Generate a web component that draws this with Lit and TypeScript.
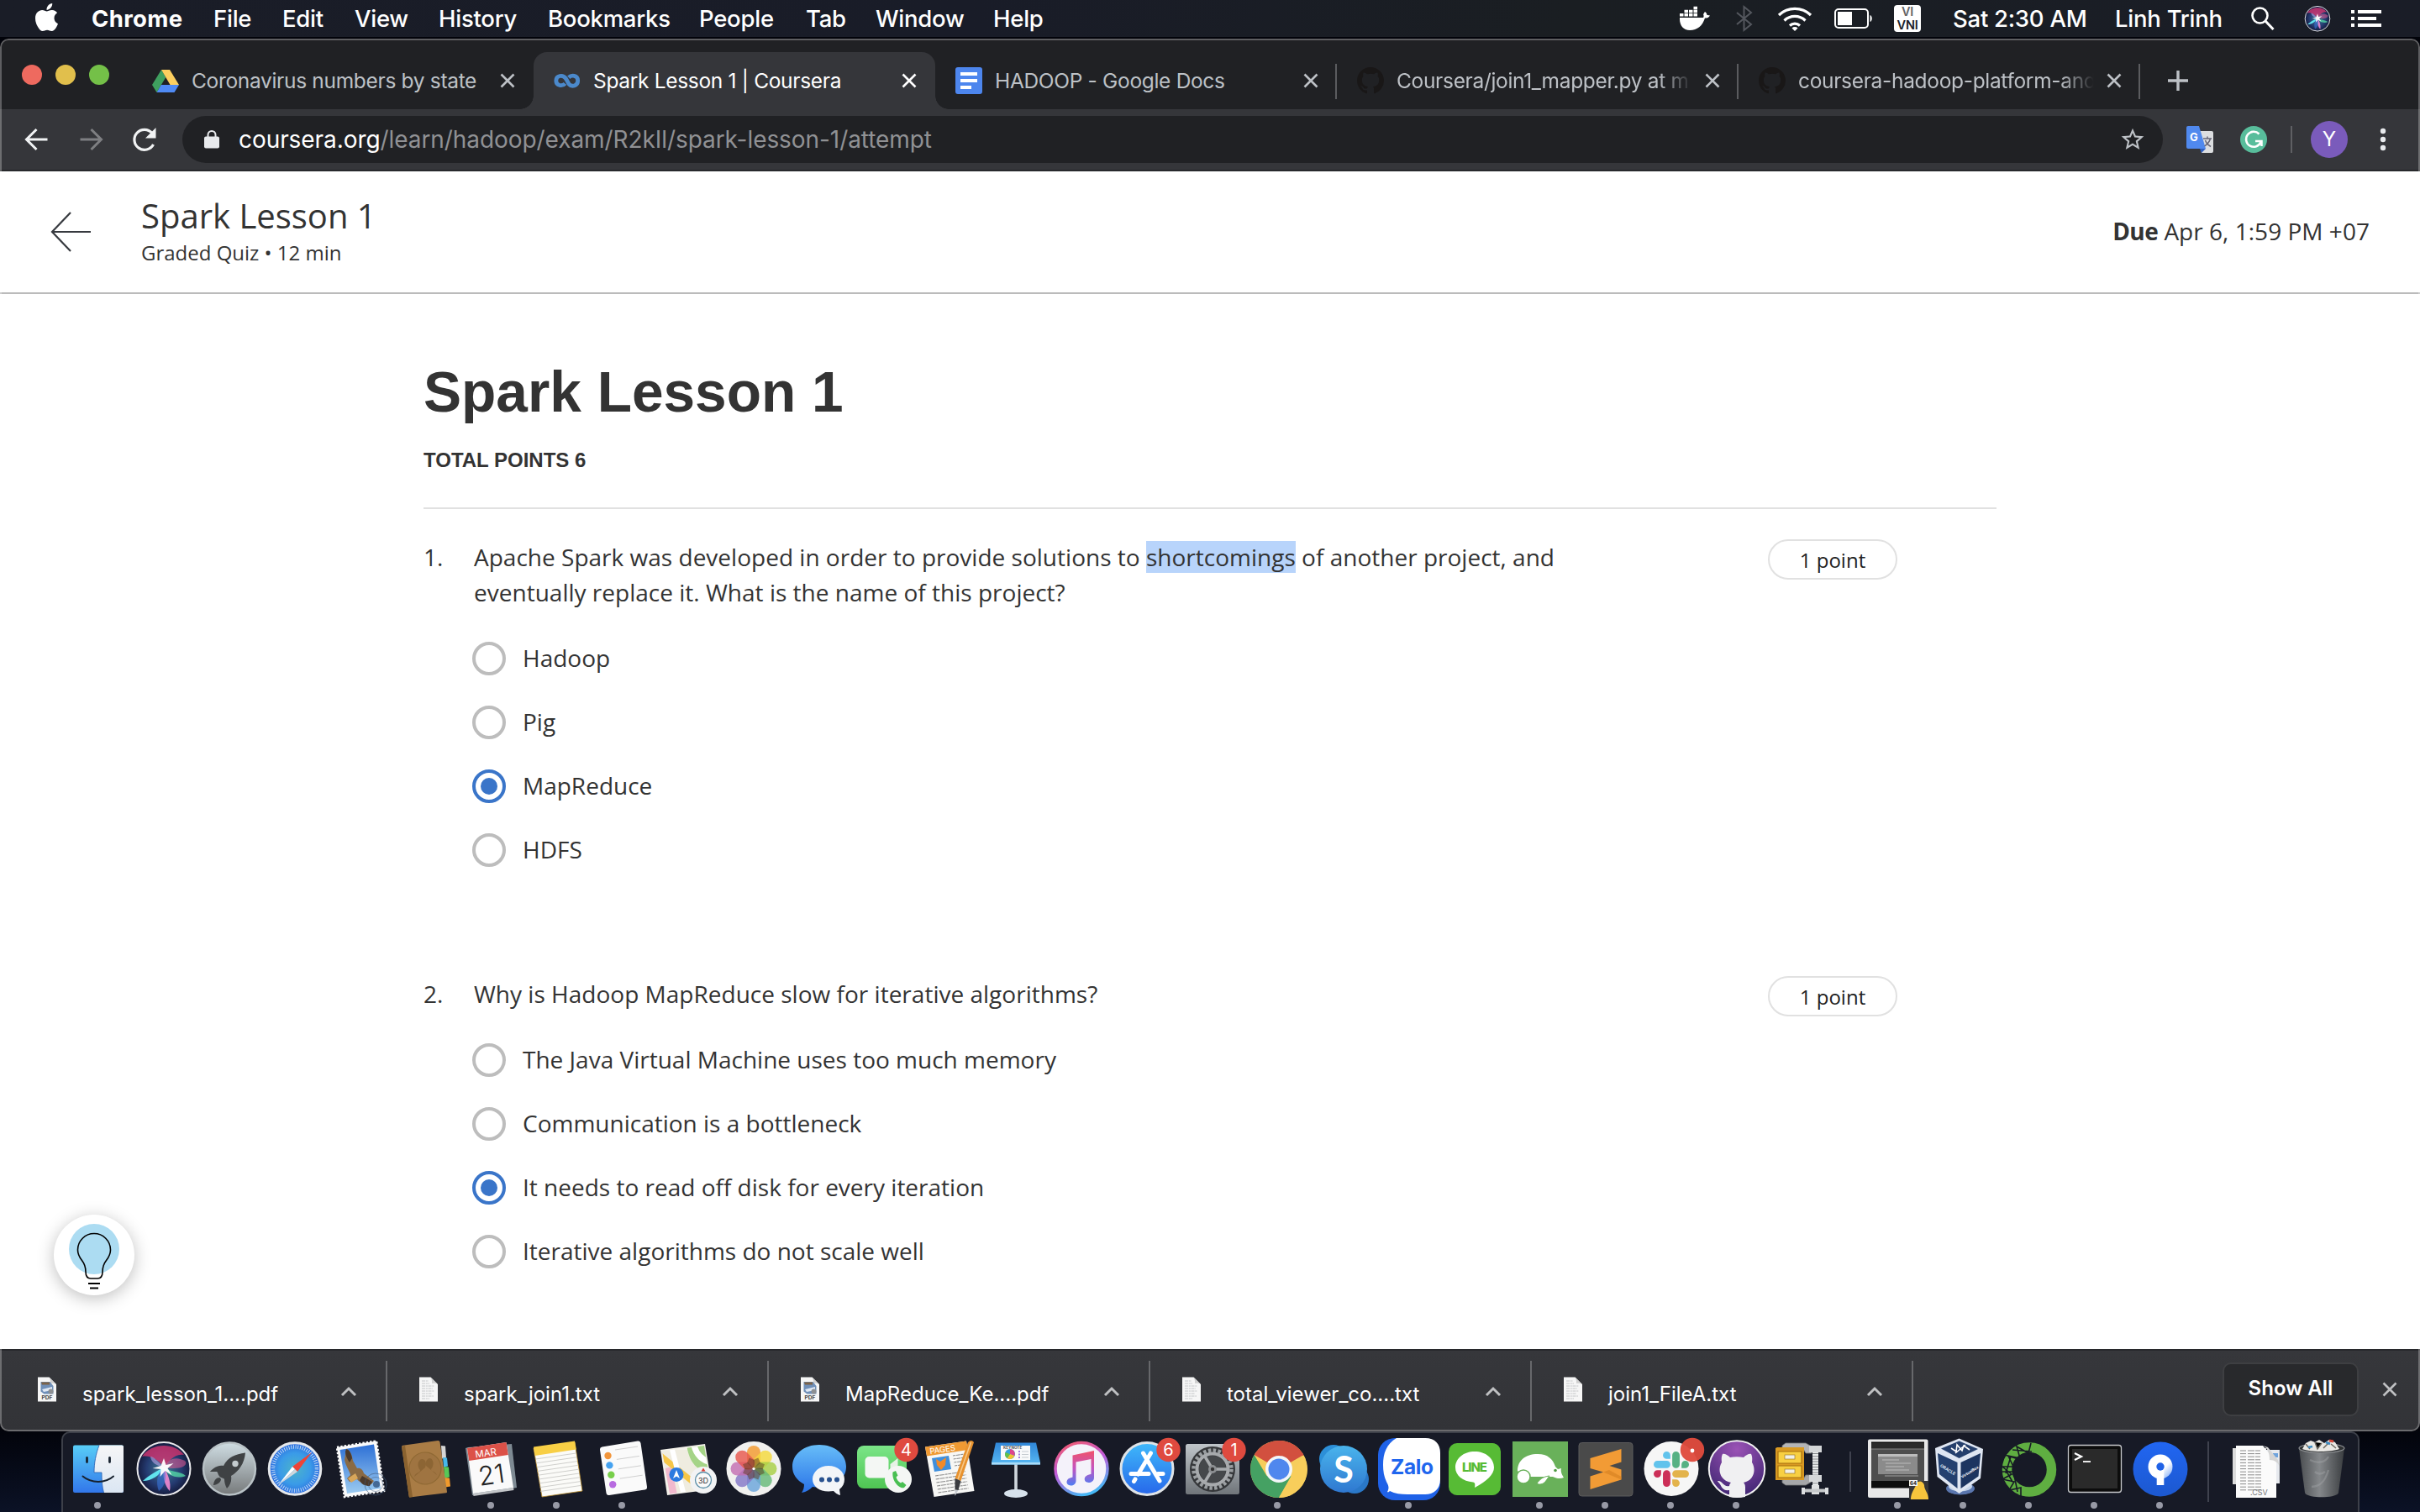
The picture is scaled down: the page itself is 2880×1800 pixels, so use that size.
import { LitElement, html, svg, css } from "lit";
import { customElement } from "lit/decorators.js";

const OCTOCAT =
  "M8 0C3.58 0 0 3.58 0 8c0 3.54 2.29 6.53 5.47 7.59.4.07.55-.17.55-.38 0-.19-.01-.82-.01-1.49-2.01.37-2.53-.49-2.69-.94-.09-.23-.48-.94-.82-1.13-.28-.15-.68-.52-.01-.53.63-.01 1.08.58 1.23.82.72 1.21 1.87.87 2.33.66.07-.52.28-.87.51-1.07-1.78-.2-3.64-.89-3.64-3.95 0-.87.31-1.59.82-2.15-.08-.2-.36-1.02.08-2.12 0 0 .67-.21 2.2.82.64-.18 1.32-.27 2-.27s1.36.09 2 .27c1.53-1.04 2.2-.82 2.2-.82.44 1.1.16 1.92.08 2.12.51.56.82 1.27.82 2.15 0 3.07-1.87 3.75-3.65 3.95.29.25.54.73.54 1.48 0 1.07-.01 1.93-.01 2.2 0 .21.15.46.55.38A8.01 8.01 0 0 0 16 8c0-4.42-3.58-8-8-8z";

const APPLE =
  "M318.7 268.7c-.2-36.7 16.4-64.4 50-84.8-18.8-26.9-47.2-41.7-84.7-44.6-35.5-2.8-74.3 20.7-88.5 20.7-15 0-49.4-19.7-76.4-19.7C63.3 141.2 4 184.8 4 273.5q0 39.3 14.4 81.2c12.8 36.7 59 126.7 107.2 125.2 25.2-.6 43-17.9 75.8-17.9 31.8 0 48.3 17.9 76.4 17.9 48.6-.7 90.4-82.5 102.6-119.3-65.2-30.7-61.7-90-61.7-91.9zm-56.6-164.2c27.3-32.4 24.8-61.9 24-72.5-24.1 1.4-52 16.4-67.9 34.9-17.5 19.8-27.8 44.3-25.6 71.9 26.1 2 49.9-11.4 69.5-34.3z";

const range = (n: number) => Array.from({ length: n }, (_, i) => i);

/* ---------- menu bar ---------- */

const MENUS = ["File", "Edit", "View", "History", "Bookmarks", "People", "Tab", "Window", "Help"];

/* ---------- tabs ---------- */

const driveIcon = html`<svg class="fav" viewBox="0 0 32 32">
  <path d="M11 3L0 21l5.500 9L16.300 12z" fill="#3f9f5f" />
  <path d="M11 3h10l11 18H21.500z" fill="#fccf5f" />
  <path d="M10.800 21H32l-5.500 9H5.500z" fill="#4f8af4" />
</svg>`;
const courseraIcon = html`<svg class="fav" viewBox="0 0 32 32">
  <path d="M13.500 19.500C10.500 23 2.800 22.500 2.800 16S11 8.800 14 13c1.700 2.300 2.600 5 4.300 7.300 3 3.400 10.400 2.400 10.400-4.300S21 9 17.800 12.200" fill="none" stroke="#4b89cb" stroke-width="4.800" />
</svg>`;
const docsIcon = html`<svg class="fav" viewBox="0 0 32 32">
  <rect width="32" height="32" rx="3" fill="#4d86ee" />
  <path d="M6 8h20M6 16h20M6 24h13" stroke="#fff" stroke-width="4" />
</svg>`;
const hubIcon = html`<svg class="fav" viewBox="0 0 16 16"><path d=${OCTOCAT} fill="#191717" /></svg>`;

const TABS = [
  { title: "Coronavirus numbers by state", icon: driveIcon, cls: "" },
  { title: "Spark Lesson 1 | Coursera", icon: courseraIcon, cls: "active" },
  { title: "HADOOP - Google Docs", icon: docsIcon, cls: "line" },
  { title: "Coursera/join1_mapper.py at m", icon: hubIcon, cls: "line fade" },
  { title: "coursera-hadoop-platform-and", icon: hubIcon, cls: "line fade" },
];

const cross = html`<svg class="cross" viewBox="0 0 20 20"><path d="M2.500 2.500l15 15M17.500 2.500l-15 15" /></svg>`;

/* ---------- quiz ---------- */

const QUESTIONS = [
  {
    text: html`Apache Spark was developed in order to provide solutions to <span class="sel">shortcomings</span> of another project, and eventually replace it. What is the name of this project?`,
    options: ["Hadoop", "Pig", "MapReduce", "HDFS"],
    picked: 2,
  },
  {
    text: html`Why is Hadoop MapReduce slow for iterative algorithms?`,
    options: [
      "The Java Virtual Machine uses too much memory",
      "Communication is a bottleneck",
      "It needs to read off disk for every iteration",
      "Iterative algorithms do not scale well",
    ],
    picked: 2,
  },
];

/* ---------- downloads ---------- */

const pdfIcon = html`<svg class="doc" viewBox="0 0 22 30">
  <path d="M0 .5h13.500L22 9v20.500H0z" fill="#f6f6f6" />
  <path d="M13.500.5L22 9c-3-1.800-6-1-7-1 .3-3-.2-5.500-1.500-7.500z" fill="#cfcfcf" />
  <path d="M3.500 6h11l4 5v9.500h-11l-4-3z" fill="#6f8fb8" /><path d="M4 6.500h10v3H5z" fill="#7c6348" />
  <path d="M5 15l12-3v4l-10 2z" fill="#dfe8f4" /><circle cx="15.500" cy="17.500" r="3" fill="#8c8f92" />
  <text x="11" y="27.300" text-anchor="middle" font-size="6.600" font-weight="700" fill="#444">PDF</text>
</svg>`;
const txtIcon = html`<svg class="doc" viewBox="0 0 22 30">
  <path d="M0 .5h13.500L22 9v20.500H0z" fill="#f6f6f6" />
  <path d="M13.500.5L22 9c-3-1.800-6-1-7-1 .3-3-.2-5.500-1.500-7.500z" fill="#cfcfcf" />
  <path d="M3 5h8M3 8h9M3 11h15M3 14h13M3 17h15M3 20h12M3 23h14M3 26h9" stroke="#c4c6c8" stroke-width="1.200" stroke-dasharray="4 .8 2 .7" />
</svg>`;

const DOWNLOADS = [
  { name: "spark_lesson_1....pdf", icon: pdfIcon },
  { name: "spark_join1.txt", icon: txtIcon },
  { name: "MapReduce_Ke....pdf", icon: pdfIcon },
  { name: "total_viewer_co....txt", icon: txtIcon },
  { name: "join1_FileA.txt", icon: txtIcon },
];

/* ---------- dock icons: x from the slot centre, y from just above the dock ---------- */

const badge = (label: string) => svg`
  <circle cx="25.500" cy="26" r="14.200" fill="#df4a3f" />
  <text x="25.500" y="33" text-anchor="middle" font-size="20" fill="#fff">${label}</text>`;

const finder = svg`
  <linearGradient id="fa" x1="0" y1="0" x2="0" y2="1"><stop offset="0" stop-color="#58cdf7" /><stop offset="1" stop-color="#3277ea" /></linearGradient>
  <linearGradient id="fb" x1="0" y1="0" x2="0" y2="1"><stop offset="0" stop-color="#f6f6f7" /><stop offset="1" stop-color="#dbe6f3" /></linearGradient>
  <rect x="-30" y="20.500" width="60" height="56.500" rx="2" fill="url(#fa)" />
  <path d="M1 20.500C-3 31-5 42-5 53H4c0 9 .5 17 2.500 24H28a2 2 0 0 0 2-2V22.500a2 2 0 0 0-2-2z" fill="url(#fb)" />
  <path d="M1 20.500C-3 31-5 42-5 53H4c0 9 .5 17 2.500 24" fill="none" stroke="#2b5fae" stroke-width=".8" />
  <path d="M-13.500 35.500v5M13.500 35.500v5" stroke="#17222f" stroke-width="2.800" stroke-linecap="round" />
  <path d="M-18.500 57.500c10 8.500 27 8.500 36.500 0" fill="none" stroke="#17222f" stroke-width="2" stroke-linecap="round" />`;

const siri = svg`
  <radialGradient id="sa" cx=".5" cy=".5" r=".55"><stop offset="0" stop-color="#3f7f96" /><stop offset=".6" stop-color="#243a70" /><stop offset="1" stop-color="#10122e" /></radialGradient>
  <circle cy="48.500" r="31.500" fill="url(#sa)" stroke="#e9e9ec" stroke-width="2" />
  <path d="M-26 34C-16 18 12 16 24 32 12 30 6 40 0 47-6 38-16 32-26 34z" fill="#d3356f" opacity=".8" />
  <path d="M0 47C4 38 14 32 26 40c2 6-8 10-26 7z" fill="#e85a93" opacity=".55" />
  <path d="M0 47c8 6 20 4 26 10-10 4-22 0-26-10z" fill="#55e0a8" opacity=".75" />
  <path d="M0 47C-6 50-18 56-25 63c10 0 20-6 25-16z" fill="#64ecf4" opacity=".95" />
  <path d="M0 47c5 8 9 18 7 28-6-6-9-18-7-28z" fill="#f28ad0" opacity=".9" />
  <path d="M0 47c-8 6-10 18-6 28 8-6 10-18 6-28z" fill="#3a74d8" opacity=".6" />
  <path d="M-16 34c4 0 9 6 16 13-9-2-15-6-16-13z" fill="#b9a4e6" opacity=".6" />
  <path d="M0 36l2.500 8 9-2-7 6 5 8-8-5-6 7 1-9-10-1 10-3z" fill="#fff" opacity=".95" />`;

const launchpad = svg`
  <linearGradient id="la" x1="0" y1="0" x2="0" y2="1"><stop offset="0" stop-color="#cfdde3" /><stop offset="1" stop-color="#777a7b" /></linearGradient>
  <circle cy="48.500" r="31" fill="url(#la)" stroke="#b9c2c6" stroke-width="2.500" />
  <path d="M19 29.500C7 31-2 35-7 45c-6-1-12 2-16 7h8l1 1c1 4 3 6 7 7l1 1c0 4 1 7 3 11 4-4 6-9 5-15C11 52 18 42 19 29.500z" fill="#3f4244" />
  <circle cx="7" cy="42.500" r="3.700" fill="#c3cbce" />
  <path d="M-11.500 59c-4 0-7 3-7.500 9 5-.5 8.500-3 9-7z" fill="#3f4244" />`;

const safari = svg`
  <radialGradient id="sf" cx=".5" cy=".5" r=".5"><stop offset="0" stop-color="#4cb3c9" /><stop offset=".6" stop-color="#3a9be8" /><stop offset="1" stop-color="#2d6bdf" /></radialGradient>
  <circle cy="48.500" r="30.800" fill="url(#sf)" stroke="#e6e8ea" stroke-width="3" />
  <circle cy="48.500" r="26" fill="none" stroke="#e8f2fc" stroke-width="4.500" stroke-dasharray=".9 1.820" opacity=".85" />
  <path d="M20 29L3 52l-6-6z" fill="#ee4437" /><path d="M-20 68l17-22 3 3z" fill="#fff" /><path d="M-20 68L3 52l-3-3z" fill="#cfd6dc" />`;

const mail = svg`
  <linearGradient id="ma" x1="0" y1="0" x2="0" y2="1"><stop offset="0" stop-color="#2d70d6" /><stop offset="1" stop-color="#9ccbf0" /></linearGradient>
  <path d="M-28 23L19 15.500 28 75l-47 7z" fill="#fafafa" stroke="#fafafa" stroke-width="2.600" stroke-dasharray="2.400 2" />
  <path d="M-24.500 26L16 19.500l8 52.500-40 6z" fill="url(#ma)" />
  <path d="M-17 25c4 1 7 6 8 14l5 9c4-1 7 2 8 6l12 9-3 4c-7 0-13-1-17-6l-9 3-3-4 4-4c-1-5-6-12-7-18z" fill="#8a6a44" />
  <path d="M-17 25c4 1 6 5 7 11l-3 5c-3-4-5-9-5-13zM2 57l12 7-3 5c-6 0-10-2-12-7z" fill="#4b3a2c" />
  <path d="M-15 60l9-6 3 6-8 5z" fill="#d9a65a" />
  <circle cx="18" cy="67" r="13" fill="none" stroke="#3f5878" stroke-width="1" opacity=".6" /><circle cx="18" cy="67" r="8.500" fill="none" stroke="#3f5878" opacity=".5" />
  <circle cx="19" cy="67" r="4" fill="#33557f" opacity=".8" />`;

const contacts = svg`
  <path d="M18 21l5 .5 1 14-5 1z" fill="#d5d5d5" /><path d="M20 35l5 .5 1 10-5 1z" fill="#48b8ea" />
  <path d="M21 46l6 .5 1 12-6 1z" fill="#57c757" /><path d="M22 59l6 .5 1 10-6 1z" fill="#f29a2c" />
  <path d="M-29 22.500c0-1 .5-1.500 1.500-1.700L14 15q2-.3 2.500 1.500L25 76q.3 1-1 1.300L-19 82.500q-1 .2-1.300-1z" fill="#a97c45" />
  <path d="M-29 22l4-1 9 61-4 .6z" fill="#8a622f" />
  <circle cx="-1" cy="48" r="19" fill="#9f7441" stroke="#8f6934" stroke-width="1.200" />
  <path d="M-14 58c2-6 7-4 7-8-4-4-3-12 2-13 4 0 6 4 4 10M13 56c-2-5-7-4-7-7 4-4 3-12-1-13-4 0-6 4-5 9" fill="#8c6534" />`;

const calendar = svg`
  <path d="M-31 24l3-1L24 19l6 52-10 2-43 7z" fill="#7e8a93" />
  <path d="M-29 24L17.500 17 26 71l-48 7z" fill="#fafafa" />
  <path d="M-29 24L17.500 17l2.300 15-46.600 7z" fill="#dc5148" />
  <path d="M-22 78L26 71l.5 3-48 7z" fill="#c3c6c9" />
  <g transform="rotate(-8 -3 50)"><text x="-4" y="33.500" text-anchor="middle" font-size="11.500" fill="#fff">MAR</text>
  <text x="-1" y="67" text-anchor="middle" font-size="31" font-weight="300" fill="#222">21</text></g>`;

const notes = svg`
  <path d="M-28 24L21 17l9 58-48 7z" fill="#fbfbf8" stroke="#b88a2a" stroke-width=".8" />
  <path d="M-28 22.500L21 15.500l1.700 10L-26.400 33z" fill="#f8cf45" />
  ${range(9).map((i) => svg`<path d=${`M${-25.5 + i * 0.75} ${37 + i * 4.8}l48-7`} stroke="#c9c9c6" stroke-width=".9" />`)}`;

const reminders = svg`
  <path d="M-27 26q-.4-3 2.500-3.500L18 15.500q3-.5 3.500 2.500L29 70q.4 3-2.500 3.500L-16 80q-3 .5-3.500-2.500z" fill="#fafafa" />
  ${["#f2953a", "#45a2f0", "#78cf4b", "#b86be0"].map(
    (c, i) => svg`<circle cx=${-17.5 + i * 1.9} cy=${33 + i * 11.4} r="4.200" fill=${c} />
    <path d=${`M${-9 + i * 1.9} ${26 + i * 11.4}l27-4`} stroke="#d0d0d0" />`
  )}`;

const maps = svg`
  <clipPath id="mc"><path d="M-31 27.500L19 21l8 51-49 6.500z" /></clipPath>
  <path d="M-33 26L20 19l9 54-54 7z" fill="#f3f1ea" />
  <g clip-path="url(#mc)"><path d="M-33 26h60v54h-60z" fill="#efece0" />
  <path d="M-2 18c2 20 10 34 34 38V16z" fill="#a5d487" /><path d="M6 16c2 14 10 24 26 26" fill="none" stroke="#fff" stroke-width="7" />
  <path d="M-34 50v34h22L-20 46z" fill="#f1b9cd" /><path d="M-34 32L30 84" stroke="#f6c648" stroke-width="7" /><path d="M-20 22l16 62" stroke="#fff" stroke-width="6" /></g>
  <circle cx="-14" cy="55.500" r="8.500" fill="#2d7be0" /><path d="M-14 50l4 10-4-2.500-4 2.500z" fill="#fff" />
  <circle cx="18" cy="62" r="16" fill="#f2f3f4" /><circle cx="18" cy="62" r="9.500" fill="#fafafa" stroke="#5b8fa8" stroke-width="1.300" />
  <path d="M18 47.500l2.500 4h-5z" fill="#dd3c35" /><text x="18" y="65.500" text-anchor="middle" font-size="9" fill="#333">3D</text>`;

const photos = svg`
  <circle cy="48.500" r="32.500" fill="#f1f1ef" />
  ${["#f39a2e", "#f4d93c", "#a8cf46", "#67b97a", "#6aa5dc", "#8477c8", "#c36fb3", "#e8584e"].map(
    (c, i) => svg`<rect x="-8" y="21" width="16" height="26" rx="8" fill=${c} opacity=".82" transform=${`rotate(${i * 45} 0 48.5)`} />`
  )}
  ${range(8).map((i) => svg`<path d="M0 48.500L-4.500 39 0 34.500 4.500 39z" fill="#5c3a22" opacity=".5" transform=${`rotate(${i * 45 + 22.5} 0 48.5)`} />`)}
  <circle cy="48.500" r="1.600" fill="#fff" />`;

const messages = svg`
  <linearGradient id="me" x1="0" y1="0" x2="0" y2="1"><stop offset="0" stop-color="#67bdf8" /><stop offset="1" stop-color="#2a73e8" /></linearGradient>
  <path d="M0 20c18 0 32 11 32 26S18 71 0 71l-8-1c-3 3-7 6-13 7 2-3 3-6 3-10-9-5-14-12-14-21C-32 31-18 20 0 20z" fill="url(#me)" />
  <path d="M11 45c11 0 19 7 19 16 0 5-2 9-6 12l1 7c-4-1-6-3-8-5l-6 .5c-11 0-19-6-19-14.500S0 45 11 45z" fill="#f3f5f8" />
  <circle cx="3" cy="61.500" r="3" fill="#28518f" /><circle cx="12" cy="61.500" r="3" fill="#28518f" /><circle cx="21" cy="61.500" r="3" fill="#28518f" />`;

const facetime = svg`
  <linearGradient id="ft" x1="0" y1="0" x2="0" y2="1"><stop offset="0" stop-color="#7be588" /><stop offset="1" stop-color="#4fc553" /></linearGradient>
  <rect x="-33" y="21" width="59" height="51" rx="8" fill="url(#ft)" />
  <rect x="-23.500" y="34" width="28" height="25.500" rx="5" fill="#f4f7f4" /><path d="M6.500 43l9-7v20l-9-5z" fill="#e6f2e6" />
  <circle cx="16" cy="61" r="16" fill="#f4f6f4" />
  <path d="M9.500 52.500l3.500-1.500 2.500 5.500-2 2c.8 3 3 5.700 5.500 7l2-1.500 4.500 4-2.500 3c-6 2-15-8.500-13.500-18.500z" fill="#49bf52" />
  ${badge("4")}`;

const pages = svg`
  <path d="M-30 22.500L19 15.500 28.500 75l-48 7z" fill="#f7f7f5" />
  <path d="M-30 22.500L19 15.500l1.800 10.500L-28 33.500z" fill="#ef9a33" />
  <text x="-24" y="31" font-size="9.500" fill="#fff" transform="rotate(-8 -24 31)">PAGES</text>
  <path d="M-22 36l20-3 3 16-20 3z" fill="#3f8fdc" /><path d="M-17 37l5 3 7-5-1 9-5 6-5-6z" fill="#f08a2a" />
  ${range(4).map((i) => svg`<path d=${`M${3 + i * 0.7} ${33 + i * 4}l14-2`} stroke="#8d8d8d" stroke-width="1.100" stroke-dasharray="3 .8 5 .7" />`)}
  ${range(6).map((i) => svg`<path d=${`M${-18 + i * 0.7} ${57 + i * 4}l36-5.3`} stroke="#8d8d8d" stroke-width="1.100" stroke-dasharray="4 .8 6 .9 3 .7" />`)}
  <path d="M21 17q4-4 7 0L12.500 63l-7-3z" fill="#e8922e" /><path d="M24.500 17L9 61" stroke="#f6c98a" stroke-width="1.600" />
  <path d="M5.500 60l7 3-3 11-4-.5z" fill="#3a3c40" /><path d="M5.500 73.500l4 .5-4 7z" fill="#c7cbd0" />`;

const keynote = svg`
  <linearGradient id="kn" x1="0" y1="0" x2="0" y2="1"><stop offset="0" stop-color="#2f86d8" /><stop offset="1" stop-color="#58b8f2" /></linearGradient>
  <rect x="-1.800" y="43" width="3.600" height="34" fill="#cfd6dd" /><ellipse cy="78" rx="14" ry="5" fill="#d7e2ec" />
  <path d="M-24 17.500h48L29 41v2.500h-58V41z" fill="url(#kn)" /><path d="M-29 41h58v2.500h-58z" fill="#a9dcf8" />
  <rect x="-18" y="21" width="35" height="17" fill="#f8fafb" />
  <text x="-15" y="24.800" font-size="4.600" font-weight="700" fill="#555">KEYNOTE</text>
  <circle cx="-7" cy="31" r="6" fill="#35a0e0" /><path d="M-7 31v-6a6 6 0 0 1 5.500 8z" fill="#e0458c" /><path d="M-7 31l5.500 2a6 6 0 0 1-9 3z" fill="#f2c230" /><path d="M-7 31l-3.500 5a6 6 0 0 1-2-7z" fill="#62c04a" />
  <path d="M4 27v9" stroke="#8a5fd0" stroke-width="1.600" stroke-dasharray="2 1.500" /><path d="M7 28h8M7 31.500h8M7 35h8" stroke="#c5cbd0" />`;

const itunes = svg`
  <linearGradient id="it" x1=".2" y1="0" x2=".6" y2="1"><stop offset="0" stop-color="#f05a72" /><stop offset=".45" stop-color="#c25bd8" /><stop offset="1" stop-color="#45b8f5" /></linearGradient>
  <linearGradient id="iu" x1="0" y1="0" x2="0" y2="1"><stop offset="0" stop-color="#f0526a" /><stop offset=".5" stop-color="#c453c0" /><stop offset="1" stop-color="#4f7df2" /></linearGradient>
  <circle cy="48.500" r="31" fill="#f4f2fa" stroke="url(#it)" stroke-width="3.500" />
  <path d="M-10.500 32.500L15 27v32c0 4-3.500 6-6.500 6-6 0-6.500-7-1-9l4-1.200V37L-6.500 40.500V63c0 3.500-3 5.500-6 5.500-6.500 0-6.500-7.500-1-9l3-1z" fill="url(#iu)" />`;

const appstore = svg`
  <linearGradient id="as" x1="0" y1="0" x2="0" y2="1"><stop offset="0" stop-color="#3fb9fa" /><stop offset="1" stop-color="#2767ea" /></linearGradient>
  <circle cy="48.500" r="31" fill="url(#as)" stroke="#dfe3e6" stroke-width="3" />
  <g stroke="#fff" stroke-width="5" stroke-linecap="round"><path d="M4.500 30l-15 25M-14 61l-1.500 2.500M-4.500 30l19.500 33M-19 54.500H2M13 54.500h6" /></g>
  ${badge("6")}`;

const gear = svg`
  <linearGradient id="sp" x1="0" y1="0" x2="0" y2="1"><stop offset="0" stop-color="#bfc5ca" /><stop offset="1" stop-color="#70757a" /></linearGradient>
  <rect x="-32" y="19" width="64" height="60" rx="2.500" fill="url(#sp)" />
  <circle cy="49" r="27" fill="#35373a" /><circle cy="49" r="22.500" fill="none" stroke="#9b9fa2" stroke-width="4.500" stroke-dasharray="3.500 2.390" />
  <circle cy="49" r="18.500" fill="none" stroke="#a7aaad" stroke-width="4" /><circle cy="49" r="16" fill="#45484b" />
  <path d="M0 49L-9 34M0 49h17.500M0 49l-9 15" stroke="#a7aaad" stroke-width="3.500" /><circle cy="49" r="5" fill="#8b8e91" /><circle cy="49" r="2.200" fill="#333" />
  ${badge("1")}`;

const chrome = svg`
  <circle cx="1" cy="49" r="34" fill="#f6cd5c" />
  <path d="M1 49L-28.400 32A34 34 0 0 1 30.400 32z" fill="#d2503f" />
  <path d="M1 15a34 34 0 0 1 29.500 17.500H1z" fill="#d2503f" />
  <path d="M-28.400 32A34 34 0 0 0 1 83L15.500 57.500 1 49l-14.500 8z" fill="#45a163" />
  <path d="M1 83L16 57l14.400-24.500A34 34 0 0 1 1 83z" fill="#f8ce5b" />
  <circle cx="1" cy="49" r="16" fill="#f4f6f8" /><circle cx="1" cy="49" r="12.500" fill="#4f87ee" />`;

const skype = svg`
  <linearGradient id="sk" x1="0" y1="0" x2="0" y2="1"><stop offset="0" stop-color="#49b4ec" /><stop offset="1" stop-color="#2f78d0" /></linearGradient>
  <circle cx="-12" cy="37" r="17" fill="#2c8fd8" /><circle cx="13" cy="61" r="17" fill="#2a78c8" />
  <circle cy="49" r="28" fill="url(#sk)" />
  <text y="65" text-anchor="middle" font-size="43" font-weight="700" fill="#fff" font-family="Lato">S</text>`;

const zalo = svg`
  <rect x="-37" y="12" width="74" height="74" rx="20" fill="#1f62e8" />
  <path d="M-15 12H19c12 0 18 7 18 18v31c0 12-8 18-18 18H-2c-8 0-15-1-21-4-1 1-2 2-3 1 3-5 1-8-1-12-3-6-4-13-4-20 0-14 4-25 16-32z" fill="#fff" />
  <text x="3.500" y="55" text-anchor="middle" font-size="24.500" font-weight="700" fill="#1f66ee" textLength="51">Zalo</text>`;

const line = svg`
  <rect x="-31" y="18" width="62" height="62" rx="10" fill="#57bb35" />
  <path d="M0 28c13 0 23 8 23 19 0 8-8 16-23 24 .5-3 1-6-2-6.500-12-1-21-8-21-17.500C-23 36-13 28 0 28z" fill="#fff" />
  <text x="0" y="52" text-anchor="middle" font-size="15" font-weight="800" fill="#57bb35" textLength="30">LINE</text>`;

const sloth = svg`
  <rect x="-33" y="16" width="66" height="66" fill="#69b15a" />
  <path d="M-27 51c0-12 9-20 24-20 12 0 18 6 21 15l3 3 4-1c-1 4 1 8 3 11-4 2-9 1-13-1l-36 0c-3-4-5-6-6-7z" fill="#fff" />
  <ellipse cx="-20" cy="58" rx="8" ry="8" fill="#fff" stroke="#69b15a" stroke-width="1.500" />
  <path d="M-4 66c3-4 6-8 15-9l-5 7c-3 3-7 4-10 2z" fill="#fff" stroke="#69b15a" stroke-width="1" />
  <circle cx="18" cy="50.500" r="1.800" fill="#4f9a43" />`;

const sublime = svg`
  <rect x="-32" y="17.500" width="64" height="63.500" rx="3.500" fill="#4a4a4a" stroke="#5c5c5c" />
  <path d="M18.500 25v15.500L4.500 45l14 4.500v12L-18.500 73V57.500L-3 52.500l-15.500-4.500V36z" fill="#f29b35" />
  <path d="M-3 52.500l7-2.500 14.500 8v3.500z" fill="#d27c1e" opacity=".55" />`;

const slack = svg`
  <circle cy="48.500" r="32.500" fill="#f6f6f6" />
  <g transform="translate(-21 28) scale(1.750)">
  <path fill="#cc2f58" d="M5.042 15.165a2.528 2.528 0 0 1-2.520 2.523A2.528 2.528 0 0 1 0 15.165a2.527 2.527 0 0 1 2.522-2.520h2.520v2.520zM6.313 15.165a2.527 2.527 0 0 1 2.521-2.520 2.527 2.527 0 0 1 2.521 2.520v6.313A2.528 2.528 0 0 1 8.834 24a2.528 2.528 0 0 1-2.521-2.522v-6.313z" />
  <path fill="#61c3ec" d="M8.834 5.042a2.528 2.528 0 0 1-2.521-2.520A2.528 2.528 0 0 1 8.834 0a2.528 2.528 0 0 1 2.521 2.522v2.520H8.834zM8.834 6.313a2.528 2.528 0 0 1 2.521 2.521 2.528 2.528 0 0 1-2.521 2.521H2.522A2.528 2.528 0 0 1 0 8.834a2.528 2.528 0 0 1 2.522-2.521h6.312z" />
  <path fill="#56b183" d="M18.956 8.834a2.528 2.528 0 0 1 2.522-2.521A2.528 2.528 0 0 1 24 8.834a2.528 2.528 0 0 1-2.522 2.521h-2.522V8.834zM17.688 8.834a2.528 2.528 0 0 1-2.523 2.521 2.527 2.527 0 0 1-2.520-2.521V2.522A2.527 2.527 0 0 1 15.165 0a2.528 2.528 0 0 1 2.523 2.522v6.312z" />
  <path fill="#e3b34c" d="M15.165 18.956a2.528 2.528 0 0 1 2.523 2.522A2.528 2.528 0 0 1 15.165 24a2.527 2.527 0 0 1-2.520-2.522v-2.522h2.520zM15.165 17.688a2.527 2.527 0 0 1-2.520-2.523 2.526 2.526 0 0 1 2.520-2.520h6.313A2.527 2.527 0 0 1 24 15.165a2.528 2.528 0 0 1-2.522 2.523h-6.313z" /></g>
  <circle cx="25" cy="26" r="14.200" fill="#e04b3d" opacity=".96" /><circle cx="25" cy="27" r="2.400" fill="#fff" />`;

const github = svg`
  <radialGradient id="gh" cx=".5" cy=".15" r=".9"><stop offset="0" stop-color="#9a52b5" /><stop offset="1" stop-color="#3c2470" /></radialGradient>
  <circle cy="48.500" r="33.200" fill="url(#gh)" stroke="#f1f1f1" stroke-width="2" />
  <path d="M-17 31c2-1 6 1 9 4 5-1 11-1 16 0 3-3 7-5 9-4 2 4 1 8 1 10 5 8 3 21-10 24 2 2 2 4 2 7v10q-10 2-19 0v-8c-8 1-9-4-11-7-1-2-3-3-3-4 6-1 7 8 14 6 0-2 1-3 2-4-14-3-16-16-11-24 0-2-1-6 1-10z" fill="#f0f0f2" />`;

const archive = svg`
  <path d="M-24 24v-3l4-3H4l7 4v8H4l-3-5h-20z" fill="#b4b5b7" stroke="#77787a" stroke-width=".8" /><path d="M-24 62v3l4 3H4l7-4v-8H4l-3 5h-20z" fill="#a6a7a9" stroke="#77787a" stroke-width=".8" />
  <path d="M-32 24l2-1H2v39h-34z" fill="#d99a22" /><path d="M-29 28H-1v14h-28zM-29 45H-1v14h-28z" fill="#f8d042" stroke="#a8700f" stroke-width="1.200" />
  <rect x="-21" y="32" width="12" height="5" fill="#f3f1e6" stroke="#9a7a30" stroke-width=".7" /><rect x="-21" y="49" width="12" height="5" fill="#f3f1e6" stroke="#9a7a30" stroke-width=".7" />
  <path d="M15.500 26v46" stroke="#e9ebec" stroke-width="7" /><path d="M15.500 30v40" stroke="#85888b" stroke-width="7" stroke-dasharray="1 2.200" />
  <path d="M8 21h15v8H8zM8 56h15v8H8z" fill="#d4d6d8" /><path d="M11 68h9v11h-9z" fill="#dfe1e2" /><path d="M0 74.500h31" stroke="#c6c9cb" stroke-width="4" /><path d="M-1 71h4v8h-4zM27 71h4v8h-4z" fill="#dcdee0" />`;

const snapshot = svg`
  <rect x="-36" y="13.500" width="71.500" height="69.500" rx="2" fill="#e8e8e8" /><rect x="-32" y="16.500" width="63" height="55" fill="#0d0d0d" />
  <rect x="-32" y="18" width="63" height="45" fill="#4e4e4e" /><path d="M-32 18h63v7h-63z" fill="#2b2b2b" /><path d="M-32 25h63" stroke="#888" stroke-width="1" />
  <rect x="-24" y="31" width="47" height="24" fill="#8b8b8b" /><path d="M-24 31h47v3h-47z" fill="#bdbdbd" /><path d="M-19 38h20M-15 42h30M-15 46h22M-15 50h28" stroke="#bcbcbc" stroke-width="1" /><path d="M-16 57h40" stroke="#777" stroke-width="2" />
  <rect x="13" y="63" width="23" height="22" fill="#363638" /><path d="M15 85c0-8 4-11 7-19 2-4 8-3 9 2 0 6 5 9 5 17z" fill="#f7c43c" /><rect x="13" y="62" width="10" height="7" fill="#f4f4f4" /><text x="18" y="68" text-anchor="middle" font-size="6" font-weight="700" fill="#222">64</text>`;

const vbox = svg`
  <ellipse cx="-4" cy="72" rx="17" ry="7.500" fill="#5a76ae" /><ellipse cx="-4" cy="69.500" rx="14" ry="6" fill="#c6d5ea" />
  <path d="M-34 24L-5.500 12.500 23 25l-3 35L-5.500 78l-26-20z" fill="#dfe6f2" />
  <path d="M-27 24.500L-5.500 15.500 17 25-5.500 36z" fill="#253f6c" /><path d="M-31 30l23.500 11v31L-29 55z" fill="#24406f" /><path d="M-3.500 41L20 30l-2.500 27.500L-3.500 72z" fill="#1d3560" />
  <path d="M-15 24l6 4 1-8 6 7 2-6 7 5M-10 30l12-10" fill="none" stroke="#fff" stroke-width="1.600" />
  <text x="-28.500" y="46" font-size="5" font-weight="700" fill="#dfe6f2" transform="rotate(32 -28 46)">ORACLE</text><text x="-2" y="60" font-size="4.600" font-weight="700" fill="#fff" transform="rotate(-32 -2 60)">VirtualBox</text>`;

const anaconda = svg`
  <circle cy="49.500" r="26.500" fill="none" stroke="#5fae41" stroke-width="11.500" />
  <path d="M2 18l-3 12-14-8 4 14-14-3 6 13-13 0 11 9-11 6 14 3-6 10 14-3 0 11M3 28L-20 26M-10 38l-19-6M-22 34l-6 20M-18 52l-14 0M-20 64l-8-14M-14 76l-4-20" fill="none" stroke="#171a26" stroke-width="1.600" />`;

const terminal = svg`
  <rect x="-31.500" y="20.500" width="63" height="56" rx="3" fill="#0c0c0c" stroke="#c6c8cb" stroke-width="1.300" /><rect x="-27" y="25" width="54" height="47" fill="#2a2a2a" />
  <path d="M-24 30l8 4-8 4" fill="none" stroke="#fff" stroke-width="2.200" /><path d="M-14 40h9" stroke="#fff" stroke-width="1.800" />`;

const sourcetree = svg`
  <linearGradient id="st" x1="0" y1="0" x2="1" y2="1"><stop offset="0" stop-color="#fff" /><stop offset=".6" stop-color="#fff" /><stop offset="1" stop-color="#6fa0f5" /></linearGradient>
  <linearGradient id="su" x1="0" y1="0" x2="0" y2="1"><stop offset="0" stop-color="#2166f2" /><stop offset="1" stop-color="#1c58cf" /></linearGradient>
  <circle cy="49" r="32.500" fill="url(#su)" />
  <circle cy="46" r="14.500" fill="url(#st)" /><rect x="-4.300" y="50" width="8.600" height="18" fill="#fff" /><circle cy="46" r="4.700" fill="#2062e6" />`;

const stack = svg`
  <path d="M-28 24h40v43h-40z" fill="#dcdcdc" /><path d="M4 26h24v40H4z" fill="#e6e9ee" /><path d="M20 30h6v5h-6z" fill="#6fa3dc" />
  <path d="M-24 21H8l16 20v42h-48z" fill="#fbfbfb" /><path d="M8 21c6 3 8 9 8 17 6 0 10 3 12 8L26 38 14 23z" fill="#d5d5d5" />
  ${range(14).map((i) => svg`<path d=${`M-19 ${27 + i * 3.6}h${i < 4 ? 24 : 25}`} stroke="#8b8b8b" stroke-width="1" stroke-dasharray="7 2 8 1" />`)}
  <text x="-7" y="79.500" font-size="9" fill="#777">.CSV</text>`;

const trash = svg`
  <linearGradient id="tr" x1="0" y1="0" x2="1" y2="0"><stop offset="0" stop-color="#4a4d50" /><stop offset=".45" stop-color="#85888b" /><stop offset="1" stop-color="#3a3d40" /></linearGradient>
  <path d="M-27 24h54L20 77c-1 7-39 7-40 0z" fill="url(#tr)" /><ellipse cy="24" rx="27" ry="5.500" fill="#2f3133" stroke="#8d9093" stroke-width="1.200" />
  <path d="M-23 25l4-7 6-3 5 2 5-3 6 4 6-4 7 3 5 8c-10 4-34 4-44 0z" fill="#e9e8e4" />
  <path d="M-19 19l5 6M-8 17l3 8 5-7M2 24l7-7M11 19l6 5" stroke="#6e6a62" stroke-width="1.500" /><path d="M-16 23l5-1M5 17l5 2" stroke="#3c8ac0" stroke-width="2.500" /><path d="M9 15l5 1" stroke="#d5483a" stroke-width="3" />
  <path d="M-14 38c8 4 18 4 22-4M-12 70c10 0 16-6 20-20M-8 52c4 4 8 3 12 0" fill="none" stroke="#a5a8ab" stroke-width="2.500" opacity=".4" />`;

const DOCK: { art: unknown; running?: boolean }[][] = [
  [
    { art: finder, running: true }, { art: siri }, { art: launchpad }, { art: safari }, { art: mail }, { art: contacts },
    { art: calendar, running: true }, { art: notes, running: true }, { art: reminders, running: true }, { art: maps },
    { art: photos }, { art: messages }, { art: facetime }, { art: pages }, { art: keynote }, { art: itunes },
    { art: appstore }, { art: gear }, { art: chrome, running: true }, { art: skype }, { art: zalo, running: true },
    { art: line }, { art: sloth, running: true }, { art: sublime, running: true }, { art: slack, running: true },
    { art: github, running: true }, { art: archive },
  ],
  [
    { art: snapshot, running: true }, { art: vbox, running: true }, { art: anaconda, running: true },
    { art: terminal, running: true }, { art: sourcetree, running: true },
  ],
  [{ art: stack }, { art: trash }],
];

@customElement("app-root")
export class AppRoot extends LitElement {
  static styles = css`
    :host { display: flex; flex-direction: column; width: 2880px; height: 1800px; overflow: hidden; background: linear-gradient(#02030a 0, #02030a 1700px, #0b1226 1800px); font-family: Inter, "Liberation Sans", sans-serif; color: #fff; }
    * { box-sizing: border-box; }
    svg { display: block; flex: none; overflow: visible; }

    .menubar { display: flex; justify-content: space-between; height: 44px; margin-bottom: 2px; flex: none; background: linear-gradient(90deg, #1a1d27, #191c28 40%, #1a1e22 65%, #1a1d27); font-size: 27.500px; line-height: 45px; font-weight: 500; letter-spacing: -0.25px; white-space: nowrap; }
    .menus { display: grid; grid-template-columns: 67px 145px 82px 86px 100px 130px 180px 127px 83px 140px auto; padding-left: 42px; }
    .menus .app { font-weight: 700; letter-spacing: 0.35px; }
    .apple { width: 27px; height: 33px; margin-top: 4px; }
    .status { display: flex; align-items: center; height: 44px; padding-right: 46px; }
    .bt { margin-left: 31px; }
    .wifi { margin-left: 29px; }
    .battery { margin-left: 26px; }
    .input { display: flex; flex-direction: column; align-items: center; width: 32px; height: 32px; border-radius: 4px; background: #fff; color: #1a1d27; font-size: 14.500px; line-height: 16px; font-weight: 600; margin: 0 38px 0 25px; }
    .input .dim { color: #666; }
    .clock { width: 193px; }
    .user { width: 162px; }
    .assist { margin: 0 24px 0 35px; }

    .window { position: relative; display: flex; flex-direction: column; height: 1658px; flex: none; border-radius: 10px; overflow: hidden; background: #202124; }
    .window::after { content: ""; position: absolute; inset: 0; border: 2px solid rgba(255, 255, 255, 0.28); border-radius: 10px; pointer-events: none; }

    .strip { display: flex; align-items: flex-end; height: 84px; flex: none; padding-left: 26px; }
    .lights { display: flex; gap: 16px; width: 131px; height: 68px; padding-top: 15px; }
    .light { width: 24px; height: 24px; border-radius: 50%; }
    .light.r { background: #ee6a5f; } .light.y { background: #e1bf4c; } .light.g { background: #74c048; }
    .tab { position: relative; display: flex; align-items: center; width: 478px; height: 68px; padding: 0 21px 0 24px; color: #bdc1c6; font-size: 24.500px; font-weight: 400; letter-spacing: -0.32px; }
    .tab.active { background: #35363a; color: #fff; border-radius: 16px 16px 0 0; }
    .tab.active::before, .tab.active::after { content: ""; position: absolute; bottom: 0; width: 16px; height: 16px; }
    .tab.active::before { left: -16px; background: radial-gradient(circle at 0 0, transparent 15.500px, #35363a 16px); }
    .tab.active::after { right: -16px; background: radial-gradient(circle at 100% 0, transparent 15.500px, #35363a 16px); }
    .tab.line { padding-right: 19px; border-right: 2px solid #4b4c4f; border-image: linear-gradient(transparent 15px, #5b5c5f 15px, #5b5c5f 55px, transparent 55px) 1; }
    .fav { width: 32px; height: 32px; }
    .label { flex: 1; min-width: 0; margin-left: 15px; white-space: nowrap; overflow: hidden; line-height: 34px; }
    .fade .label { margin-right: 14px; -webkit-mask-image: linear-gradient(90deg, #000 calc(100% - 40px), transparent); mask-image: linear-gradient(90deg, #000 calc(100% - 40px), transparent); }
    .cross { width: 20px; height: 20px; fill: none; stroke: currentColor; stroke-width: 2.600; }
    .plus { width: 24px; height: 24px; margin: 0 0 22px 33px; }

    .toolbar { display: flex; align-items: center; height: 74px; flex: none; background: #35363a; border-bottom: 2px solid #28292c; padding: 0 40px 0 28px; }
    .nav { display: flex; align-items: center; width: 189px; }
    .forward { margin-left: 36px; }
    .reload { margin-left: 34px; }
    .omni { display: flex; align-items: center; width: 2357px; height: 56px; border-radius: 28px; background: #202124; padding: 0 20px 0 26px; font-size: 28px; line-height: 56px; letter-spacing: -0.07px; color: #909194; }
    .omni .host { color: #fff; }
    .url { flex: 1; margin-left: 23px; white-space: nowrap; }
    .ext { display: flex; align-items: center; flex: 1; }
    .translate { margin-left: 28px; }
    .gram { margin-left: 32px; }
    .rule { width: 2px; height: 32px; background: #5f6063; margin: 0 22px 0 28px; }
    .avatar { width: 44px; height: 44px; border-radius: 50%; background: #7a5bbb; font-size: 24px; line-height: 44px; text-align: center; }
    .dots { margin-left: auto; }

    .page { position: relative; flex: none; height: 1402px; overflow: hidden; background: #fff; color: #333; font-family: "Open Sans", sans-serif; }
    .head { display: flex; align-items: center; height: 146px; border-bottom: 2px solid #bbb; padding: 0 60px 0 60px; }
    .heading { margin: 0 auto 1px 58px; }
    .name { font-size: 40px; line-height: 50px; }
    .meta { font-size: 24px; line-height: 37px; }
    .due { font-size: 28px; line-height: 40px; margin-bottom: 2px; letter-spacing: 0.03px; }
    .due b { font-weight: 700; letter-spacing: -0.6px; }
    .quiz { width: 1872px; margin-left: 504px; padding-top: 77px; }
    h1 { margin: 0; font: 700 67.600px/80px "Liberation Sans", sans-serif; }
    .total { margin-top: 23px; padding-bottom: 38px; border-bottom: 2px solid #e1e1e1; font: 700 24px/36px "Liberation Sans", sans-serif; margin-bottom: 36px; }
    .question { display: grid; grid-template-columns: 60px 1310px 1fr; font-size: 28px; line-height: 42px; align-items: start; margin-bottom: 130px; }
    .stem { letter-spacing: 0.01px; }
    .sel { background: #b8d4fb; }
    .points { width: 154px; height: 48px; border: 2px solid #e1e1e1; border-radius: 24px; justify-self: start; margin-left: 230px; text-align: center; font-size: 24px; line-height: 46px; color: #222; }
    .options { display: flex; flex-direction: column; gap: 36px; margin: 38px 0 0 -2px; }
    .option { display: flex; align-items: center; gap: 20px; height: 40px; line-height: 38px; }
    .choice { padding-bottom: 2px; }
    .radio { display: flex; align-items: center; justify-content: center; width: 40px; height: 40px; border: 4px solid #bdbdbd; border-radius: 50%; }
    .on .radio { border-color: #3a75c9; }
    .on .radio::after { content: ""; width: 20px; height: 20px; border-radius: 50%; background: #3a75c9; }
    .hint { position: absolute; left: 64px; top: 1242px; width: 96px; height: 96px; border-radius: 50%; background: #fff; box-shadow: 0 4px 20px rgba(0, 0, 0, 0.25); }

    .shelf { display: flex; align-items: flex-start; height: 98px; flex: none; background: linear-gradient(#36373b, #323337); border-top: 2px solid #28292c; padding: 12px 26px 0 7px; }
    .item { display: flex; align-items: center; width: 454px; height: 72px; border-right: 2px solid #67686b; padding: 0 35px 0 38px; font-size: 24px; }
    .doc { width: 22px; height: 30px; margin-bottom: 4px; }
    .file { flex: 1; margin-left: 31px; line-height: 36px; padding-top: 8px; white-space: nowrap; }
    .chev { width: 18px; height: 11px; }
    .showall { margin: 2px 0 0 auto; width: 162px; height: 64px; border: 2px solid #3e3f42; border-radius: 10px; background: #28292c; text-align: center; font-size: 24px; line-height: 58px; font-weight: 600; }
    .shelf > .cross { margin: 24px 0 0 27px; color: #bfc0c2; }

    .dock { display: flex; width: 2735px; height: 110px; flex: none; margin-left: 73px; border: 2px solid #3d4049; border-radius: 10px 10px 0 0; padding-left: 3px; background: #171a26; }
    .slot { width: 78px; height: 94px; }
    .bar { width: 2px; background: #3f424e; margin: 22px 17px 0; height: 48px; }
    .bar.tall { margin-top: 10px; height: 72px; }
  `;

  render() {
    return html`
      <div class="menubar">
        <div class="menus">
          <svg class="apple" viewBox="4 32 377 448" preserveAspectRatio="none"><path d=${APPLE} fill="#fff" /></svg>
          <span class="app">Chrome</span>
          ${MENUS.map((m) => html`<span>${m}</span>`)}
        </div>
        <div class="status">
          <svg width="36" height="28" viewBox="0 0 36 28"><path d="M0 13h28c1-1 .5-3 0-4 1-1 1-2 2-3 1.500 1 2.500 2.500 2.500 4 1.500 0 2.500.2 3.500.6-1 2-3 3-6 3C27 23 21 28 12 28 4 28-.5 22 0 13z" fill="#fff" /><path d="M2 9.700h4.500M7.500 9.700H12M13 9.700h4.500M18.500 9.700H23M7.500 5.500H12M13 5.500h4.500M18.500 5.500H23M18.500 1.500H23" transform="translate(-2)" stroke="#fff" stroke-width="3.600" /></svg>
          <svg class="bt" width="20" height="30" viewBox="0 0 20 30"><path d="M1 8l17 14-8.500 7V1L18 8 1 22" fill="none" stroke="#54575e" stroke-width="2" /></svg>
          <svg class="wifi" width="42" height="29" viewBox="0 0 42 29"><path d="M2 10a27.500 27.500 0 0 1 38 0M8.500 16.500a18 18 0 0 1 25 0M15 22.500a9 9 0 0 1 12 0" fill="none" stroke="#fff" stroke-width="3.300" /><path d="M17.500 25.500a5 5 0 0 1 7 0L21 29z" fill="#fff" /></svg>
          <svg class="battery" width="46" height="24" viewBox="0 0 46 24"><rect x="1" y="1" width="39" height="22" rx="4" fill="none" stroke="#fff" stroke-width="2" /><rect x="4" y="4" width="17" height="16" fill="#fff" /><path d="M42.500 8c3 1 3 7 0 8z" fill="#fff" /></svg>
          <div class="input"><div class="dim">VI</div><div>VNI</div></div>
          <span class="clock">Sat 2:30 AM</span><span class="user">Linh Trinh</span>
          <svg width="28" height="28" viewBox="0 0 28 28"><circle cx="10.500" cy="10.500" r="9" fill="none" stroke="#fff" stroke-width="2.600" /><path d="M17 17l9.500 10" stroke="#fff" stroke-width="3" /></svg>
          <svg class="assist" width="32" height="32" viewBox="-34 14 68 68">${siri}</svg>
          <svg width="36" height="20" viewBox="0 0 36 20"><path d="M0 2h4M8 2h28M0 10h4M8 10h22M0 18h4M8 18h28" stroke="#fff" stroke-width="4" /></svg>
        </div>
      </div>

      <div class="window">
        <div class="strip">
          <div class="lights"><div class="light r"></div><div class="light y"></div><div class="light g"></div></div>
          ${TABS.map((t) => html`<div class="tab ${t.cls}">${t.icon}<div class="label">${t.title}</div>${cross}</div>`)}
          <svg class="plus" viewBox="0 0 24 24"><path d="M12 0v24M0 12h24" stroke="#bdc1c6" stroke-width="3.400" /></svg>
        </div>
        <div class="toolbar">
          <div class="nav">
            <svg width="30" height="28" viewBox="0 0 30 28"><path d="M28.500 14H4M15.500 2L3.500 14l12 12" fill="none" stroke="#f1f3f4" stroke-width="3" /></svg>
            <svg class="forward" width="30" height="28" viewBox="0 0 30 28"><path d="M1.500 14H26M14.500 2l12 12-12 12" fill="none" stroke="#7e7f82" stroke-width="3" /></svg>
            <svg class="reload" width="28" height="28" viewBox="0 0 28 28"><path d="M24.500 20A12 12 0 1 1 23 6.500" fill="none" stroke="#f1f3f4" stroke-width="3.200" /><path d="M27.500 0v12.500H15z" fill="#f1f3f4" /></svg>
          </div>
          <div class="omni">
            <svg width="18" height="22" viewBox="0 0 18 22"><rect y="7.500" width="18" height="14" rx="2" fill="#e8eaed" /><path d="M4.500 8V5.500a4.500 4.500 0 0 1 9 0V8" fill="none" stroke="#e8eaed" stroke-width="2" /></svg>
            <div class="url"><span class="host">coursera.org</span><span>/learn/hadoop/exam/R2kIl/spark-lesson-1/attempt</span></div>
            <svg width="32" height="32" viewBox="0 0 24 24"><path d="M22 9.240l-7.190-.62L12 2 9.190 8.630 2 9.240l5.460 4.730L5.820 21 12 17.270 18.180 21l-1.630-7.030L22 9.240zM12 15.400l-3.760 2.270 1-4.280-3.320-2.880 4.380-.38L12 6.100l1.710 4.040 4.380.38-3.320 2.880 1 4.280L12 15.400z" fill="#bdc1c6" /></svg>
          </div>
          <div class="ext">
            <svg class="translate" width="32" height="32" viewBox="0 0 32 32"><path d="M14 6h16q2 0 2 2v22q0 2-2 2H18z" fill="#dcdee0" /><path d="M0 2q0-2 2-2h13l8 27H2q-2 0-2-2z" fill="#5089ee" /><path d="M16 27h7l-5 5z" fill="#2f5fc0" /><text x="4" y="18" font-size="13" font-weight="700" fill="#fff">G</text><path d="M20 15h10M25 12.500V15M28.500 15c-1 4-4 7-7 9M22.500 17c1 3 4 6 6.500 7.500" fill="none" stroke="#667" stroke-width="1.500" /></svg>
            <svg class="gram" width="32" height="32" viewBox="0 0 32 32"><circle cx="16" cy="16" r="16" fill="#58bd9b" /><path d="M22.500 9.500A9 9 0 1 0 24.500 19M18 18h7.500v6" fill="none" stroke="#fff" stroke-width="2.500" /></svg>
            <div class="rule"></div>
            <div class="avatar">Y</div>
            <svg class="dots" width="8" height="28" viewBox="0 0 8 28"><circle cx="4" cy="4" r="3.200" fill="#e8eaed" /><circle cx="4" cy="14" r="3.200" fill="#e8eaed" /><circle cx="4" cy="24" r="3.200" fill="#e8eaed" /></svg>
          </div>
        </div>

        <div class="page">
          <div class="head">
            <svg width="50" height="48" viewBox="0 0 50 48"><path d="M48 24H2M24 1L2 24l22 23" fill="none" stroke="#373a3f" stroke-width="2.200" /></svg>
            <div class="heading"><div class="name">Spark Lesson 1</div><div class="meta">Graded Quiz • 12 min</div></div>
            <div class="due"><b>Due</b> Apr 6, 1:59 PM +07</div>
          </div>
          <div class="quiz">
            <h1>Spark Lesson 1</h1>
            <div class="total">TOTAL POINTS 6</div>
            ${QUESTIONS.map(
              (q, i) => html`<div class="question">
                <div>${i + 1}.</div>
                <div>
                  <div class="stem">${q.text}</div>
                  <div class="options">
                    ${q.options.map((o, k) => html`<div class="option ${k === q.picked ? "on" : ""}"><div class="radio"></div><span class="choice">${o}</span></div>`)}
                  </div>
                </div>
                <div class="points">1 point</div>
              </div>`
            )}
          </div>
          <div class="hint">
            <svg width="96" height="96" viewBox="0 0 96 96"><circle cx="48" cy="41" r="30" fill="#acdcf2" /><path d="M38 68c0-6-1-9-4.500-13.500C30 50 28.500 47 28.500 42a19.500 19.500 0 0 1 39 0c0 5-1.500 8-5 12.500C59 59 58 62 58 68c0 5-2 8-6 8h-8c-4 0-6-3-6-8z" fill="none" stroke="#000" stroke-width="1.600" /><path d="M41 82h14M43 87.500h10" stroke="#000" stroke-width="1.800" /></svg>
          </div>
        </div>

        <div class="shelf">
          ${DOWNLOADS.map((d) => html`<div class="item">${d.icon}<div class="file">${d.name}</div><svg class="chev" viewBox="0 0 18 11"><path d="M1 10l8-8 8 8" fill="none" stroke="#bfc0c2" stroke-width="3" /></svg></div>`)}
          <div class="showall">Show All</div>
          ${cross}
        </div>
      </div>

      <div class="dock">
        ${DOCK.map(
          (group, g) => html`${g ? html`<div class="bar ${g === 2 ? "tall" : ""}"></div>` : ""}
          ${group.map((d) => html`<svg class="slot" viewBox="-39 6 78 94">${d.art}${d.running ? svg`<circle cx="-1" cy="92" r="4" fill="#989aa6" />` : ""}</svg>`)}`
        )}
      </div>
    `;
  }
}
